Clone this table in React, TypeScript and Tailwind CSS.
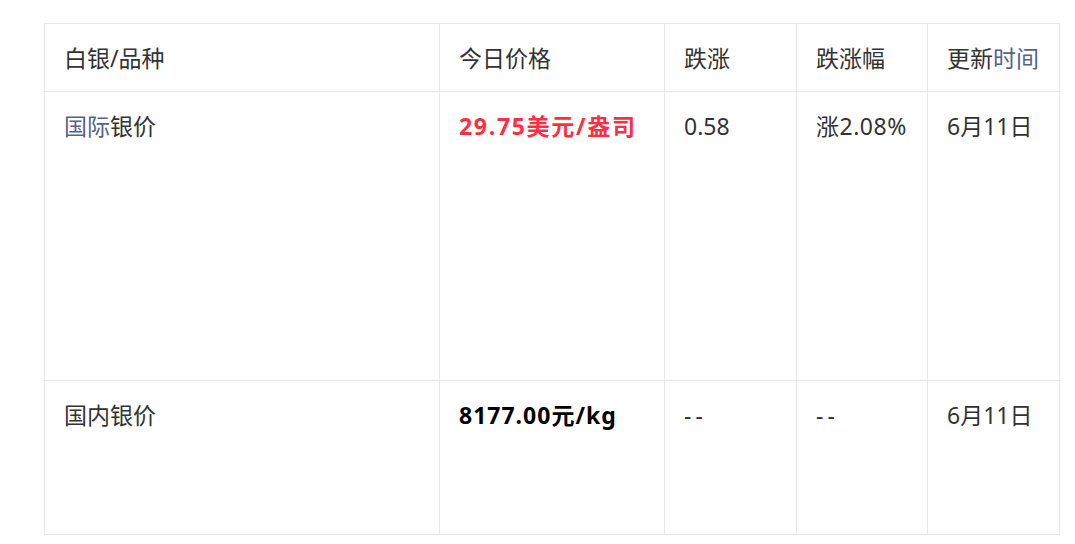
import React from 'react';

const font = { fontFamily: '"Noto Sans", "Noto Sans CJK SC", sans-serif' };

export default function App() {
  const cell = 'border border-[#e8e8e8] pl-[19px] pr-2 pt-[19px] align-top';
  return (
    <div className="bg-white w-[1075px] h-[544px] pt-[23px] pl-[44px]" style={font}>
      <table className="border-collapse text-[23px] leading-[30px] text-[#333]">
        <colgroup>
          <col className="w-[395px]" />
          <col className="w-[225px]" />
          <col className="w-[132px]" />
          <col className="w-[131px]" />
          <col className="w-[132px]" />
        </colgroup>
        <tbody>
          <tr className="h-[68px]">
            <td className={cell}>白银/品种</td>
            <td className={cell}>今日价格</td>
            <td className={cell}>跌涨</td>
            <td className={cell}>跌涨幅</td>
            <td className={cell}>
              更新<span className="text-[#56628c]">时间</span>
            </td>
          </tr>
          <tr className="h-[289px]">
            <td className={cell}>
              <span className="text-[#56628c]">国际</span>银价
            </td>
            <td className={`${cell} font-bold tracking-[1.7px] text-[#ff2e42]`}>29.75美元/盎司</td>
            <td className={cell}>0.58</td>
            <td className={`${cell} tracking-[0.5px]`}>涨2.08%</td>
            <td className={cell}>6月11日</td>
          </tr>
          <tr className="h-[154px]">
            <td className={cell}>国内银价</td>
            <td className={`${cell} font-bold tracking-[1px] text-black`}>8177.00元/kg</td>
            <td className={`${cell} tracking-[4px]`}>--</td>
            <td className={`${cell} tracking-[4px]`}>--</td>
            <td className={cell}>6月11日</td>
          </tr>
        </tbody>
      </table>
    </div>
  );
}
